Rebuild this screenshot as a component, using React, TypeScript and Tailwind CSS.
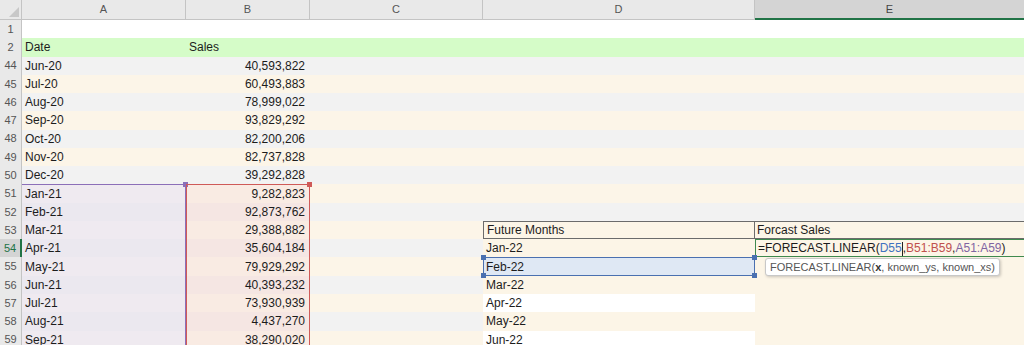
import React from 'react'

type Row = { n: number; a?: string; b?: string }

const rows: Row[] = [
  { n: 1 },
  { n: 2, a: 'Date', b: 'Sales' },
  { n: 44, a: 'Jun-20', b: '40,593,822' },
  { n: 45, a: 'Jul-20', b: '60,493,883' },
  { n: 46, a: 'Aug-20', b: '78,999,022' },
  { n: 47, a: 'Sep-20', b: '93,829,292' },
  { n: 48, a: 'Oct-20', b: '82,200,206' },
  { n: 49, a: 'Nov-20', b: '82,737,828' },
  { n: 50, a: 'Dec-20', b: '39,292,828' },
  { n: 51, a: 'Jan-21', b: '9,282,823' },
  { n: 52, a: 'Feb-21', b: '92,873,762' },
  { n: 53, a: 'Mar-21', b: '29,388,882' },
  { n: 54, a: 'Apr-21', b: '35,604,184' },
  { n: 55, a: 'May-21', b: '79,929,292' },
  { n: 56, a: 'Jun-21', b: '40,393,232' },
  { n: 57, a: 'Jul-21', b: '73,930,939' },
  { n: 58, a: 'Aug-21', b: '4,437,270' },
  { n: 59, a: 'Sep-21', b: '38,290,020' },
]

const future: Record<number, { d: string; bg: string }> = {
  53: { d: 'Future Months', bg: 'bg-[#fcf5e7]' },
  54: { d: 'Jan-22', bg: 'bg-[#fcf5e7]' },
  55: { d: 'Feb-22', bg: 'bg-[#dfe8f4]' },
  56: { d: 'Mar-22', bg: 'bg-[#fcf5e7]' },
  57: { d: 'Apr-22', bg: 'bg-white' },
  58: { d: 'May-22', bg: 'bg-[#fcf5e7]' },
  59: { d: 'Jun-22', bg: 'bg-white' },
}

function stripe(n: number) {
  if (n === 1) return 'bg-white'
  if (n === 2) return 'bg-[#d5fcc8]'
  return n % 2 === 0 ? 'bg-[#f2f2f2]' : 'bg-[#fcf5e8]'
}

export default function App() {
  return (
    <div className="w-[1024px] h-[345px] overflow-hidden bg-white font-['Liberation_Sans',Arial,sans-serif] text-[12px] text-[#1c1c1c]">
      <div className="grid grid-cols-[22px_164px_124px_173px_272px_269px]">
        {/* column headers */}
        <div className="h-[20px] bg-[#e9e9e9] border-b border-r border-[#c4c4c4] flex items-end justify-end p-[2px]">
          <div className="w-0 h-0 border-l-[10px] border-l-transparent border-b-[10px] border-b-[#c8c8c8]" />
        </div>
        {['A', 'B', 'C', 'D'].map((c) => (
          <div
            key={c}
            className="h-[20px] bg-[#e9e9e9] border-b border-r border-[#c4c4c4] flex items-center justify-center text-[11px] text-[#555]"
          >
            {c}
          </div>
        ))}
        <div className="h-[20px] bg-[#d4d4d4] border-b-2 border-[#217346] flex items-center justify-center text-[11px] text-[#444]">
          E
        </div>

        {rows.map((r) => {
          const inRange = r.n >= 51
          const bgA = inRange ? (r.n % 2 ? 'bg-[#efeaf0]' : 'bg-[#ebe8ef]') : stripe(r.n)
          const bgB = inRange ? (r.n % 2 ? 'bg-[#f9ebe3]' : 'bg-[#f5e6e3]') : stripe(r.n)
          const f = future[r.n]
          const active = r.n === 54
          return (
            <React.Fragment key={r.n}>
              <div
                className={`h-[18.27px] flex items-center justify-center text-[11px] border-r ${
                  active
                    ? 'bg-[#d4d4d4] text-[#217346] border-r-2 border-[#217346]'
                    : 'bg-[#e9e9e9] text-[#555] border-[#c4c4c4]'
                }`}
              >
                {r.n}
              </div>
              <div className={`relative h-[18.27px] flex items-center pl-[3px] ${bgA}`}>
                {r.n === 51 && (
                  <div className="absolute z-10 left-0 top-0 w-full h-[164.43px] border-t border-r border-[#8c6fb8] pointer-events-none">
                    <div className="absolute -top-[3px] -right-[3px] w-[5px] h-[5px] bg-[#8c6fb8]" />
                  </div>
                )}
                {r.a}
              </div>
              <div
                className={`relative h-[18.27px] flex items-center ${r.n === 2 ? 'justify-start pl-[3px]' : 'justify-end pr-[5px]'} ${bgB}`}
              >
                {r.n === 51 && (
                  <div className="absolute z-10 left-0 top-0 w-full h-[164.43px] border-t border-r border-l border-[#cf5a58] pointer-events-none">
                    <div className="absolute -top-[3px] -right-[3px] w-[5px] h-[5px] bg-[#cf5a58]" />
                  </div>
                )}
                {r.b}
              </div>
              <div className={`h-[18.27px] ${stripe(r.n)}`} />
              <div
                className={`relative h-[18.27px] flex items-center pl-[3px] ${f ? f.bg : stripe(r.n)} ${
                  r.n === 53 ? 'border border-[#6b6b6b]' : ''
                }`}
              >
                {r.n === 55 && (
                  <div className="absolute z-10 inset-0 border-[1.5px] border-[#4a70b0]">
                    <div className="absolute -top-[3px] -left-[3px] w-[5px] h-[5px] bg-[#4a70b0]" />
                    <div className="absolute -top-[3px] -right-[3px] w-[5px] h-[5px] bg-[#4a70b0]" />
                    <div className="absolute -bottom-[3px] -left-[3px] w-[5px] h-[5px] bg-[#4a70b0]" />
                    <div className="absolute -bottom-[3px] -right-[3px] w-[5px] h-[5px] bg-[#4a70b0]" />
                  </div>
                )}
                {f?.d}
              </div>
              <div
                className={`relative h-[18.27px] flex items-center pl-[2px] whitespace-nowrap ${
                  r.n >= 53 ? 'bg-[#fcf5e7]' : stripe(r.n)
                } ${r.n === 53 ? 'border-y border-[#6b6b6b]' : ''} ${
                  active ? 'border-y border-l border-[#3f8a4e]' : ''
                }`}
              >
                {r.n === 53 && 'Forcast Sales'}
                {active && (
                  <span className="text-[12px]">
                    =FORECAST.LINEAR(<span className="text-[#3f72c0]">D55</span>
                    <span className="inline-block w-px h-[14px] bg-[#222] align-middle" />,
                    <span className="text-[#c0504d]">B51:B59</span>,
                    <span className="text-[#8064a2]">A51:A59</span>)
                  </span>
                )}
                {r.n === 55 && (
                  <div className="absolute z-10 left-[10px] top-[1px] h-[18px] px-[4px] flex items-center bg-white border border-[#c8c8c8] rounded-[3px] shadow-[1px_1px_3px_rgba(0,0,0,0.2)] text-[11px] text-[#555]">
                    FORECAST.LINEAR(<span className="font-bold text-[#333]">x</span>, known_ys, known_xs)
                  </div>
                )}
              </div>
            </React.Fragment>
          )
        })}
      </div>
    </div>
  )
}
